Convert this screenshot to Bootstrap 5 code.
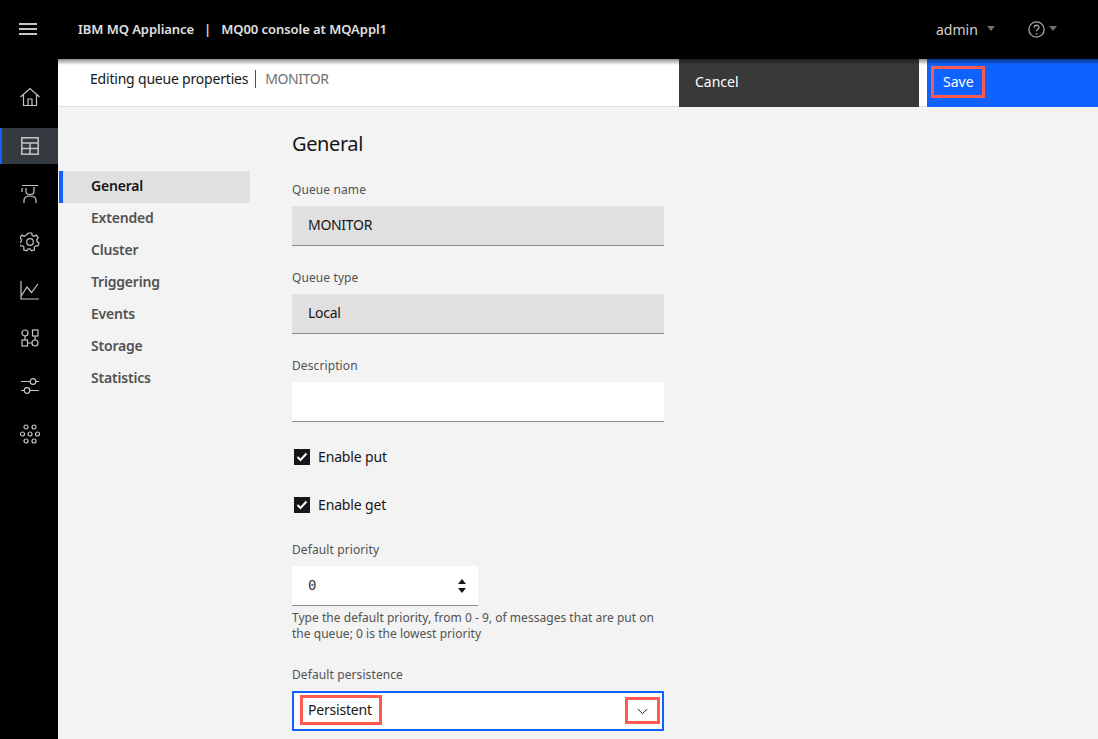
<!DOCTYPE html>
<html lang="en">
  <head>
    <meta charset="UTF-8" />
    <title>MQ00 console at MQAppl1</title>
    <link href="https://cdn.jsdelivr.net/npm/bootstrap@5.3.2/dist/css/bootstrap.min.css" rel="stylesheet" />
    <style>
      html, body { height: 739px; overflow: hidden; }
      body { font-family: "Noto Sans", "Liberation Sans", sans-serif; font-size: 14px; background: #f3f3f3; color: #161616; }

      /* top bar */
      .mq-top { height: 59px; background: #000; padding: 0; flex-wrap: nowrap; }
      .mq-burger { width: 58px; display: flex; justify-content: center; padding-right: 2px; }
      .mq-title { color: #e0e0e0; font-size: 13px; font-weight: 600; margin-left: 20px; white-space: pre; letter-spacing: -.05px; }
      .mq-right { margin-left: auto; width: 162px; height: 59px; position: relative; }
      .mq-admin { color: #d0d0d0; font-size: 14px; position: absolute; left: 0; top: 19px; }
      .mq-caret { width: 0; height: 0; border-left: 4px solid transparent; border-right: 4px solid transparent; border-top: 5px solid #6f6f6f; position: absolute; top: 26px; }
      .mq-help { position: absolute; left: 92px; top: 21px; }

      /* side rail */
      .mq-rail { width: 58px; background: #000; padding-top: 20px; gap: 12px; flex-shrink: 0; }
      .mq-rail-item { height: 36px; display: flex; align-items: center; justify-content: center; border-left: 2px solid transparent; }
      .mq-rail-item:first-child { margin-bottom: 1px; }
      .mq-rail-item.is-active { background: #343a3f; border-left-color: #0f62fe; }

      /* sub header */
      .mq-sub { height: 48px; background: #fff; border-bottom: 1px solid #e0e0e0; position: relative; flex-shrink: 0; }
      .mq-sub::after { content: ""; position: absolute; left: 0; right: 0; top: 0; height: 6px; background: linear-gradient(rgba(0,0,0,.45), rgba(0,0,0,0)); }
      .mq-crumb { margin-left: 32px; margin-top: 11px; display: flex; line-height: 18px; height: 18px; letter-spacing: -.2px; }
      .mq-crumb-name { color: #6f6f6f; border-left: 1px solid #525252; margin-left: 7px; padding-left: 9px; letter-spacing: -.4px; }
      .mq-btn { height: 48px; border-radius: 0; border: 0; color: #fff; font-size: 14px; text-align: left; display: flex; align-items: center; padding: 0; flex-shrink: 0; }
      .mq-cancel { width: 240px; background: #393939; padding: 0 0 3px 16px; margin-right: 8px; }
      .mq-cancel:hover { background: #393939; color: #fff; }
      .mq-save { width: 171px; background: #0f62fe; padding: 0 0 1px 4px; }
      .mq-save:hover { background: #0f62fe; color: #fff; }
      .mq-mark { border: 3px solid #ff5a4f; display: inline-flex; align-items: center; }
      .mq-save .mq-mark { width: 54px; height: 32px; padding: 0 0 2px 9px; margin-top: -1px; }

      /* section nav */
      .mq-nav { width: 191px; margin-left: 1px; padding-top: 64px; flex-shrink: 0; }
      .mq-nav .nav-link { height: 32px; padding: 0 0 0 28px; line-height: 30px; color: #525252; font-weight: 600; border-left: 4px solid transparent; letter-spacing: -.2px; }
      .mq-nav .nav-link.active { background: #e0e0e0; color: #161616; border-left-color: #0f62fe; }

      /* form */
      .mq-form { width: 372px; margin-left: 42px; }
      .mq-form h2 { font-size: 20px; font-weight: 400; line-height: 26px; margin: 24px 0 24px; letter-spacing: -.4px; }
      .mq-form .form-label { font-size: 12px; line-height: 16px; color: #525252; margin: 0 0 8px; padding-top: 1px; display: block; letter-spacing: .1px; }
      .mq-form .form-control { height: 40px; border: 0; border-bottom: 1px solid #8d8d8d; border-radius: 0; font-size: 14px; padding: 0 16px 2px; color: #161616; letter-spacing: -.3px; }
      .mq-form .form-control[readonly] { background: #e0e0e0; }
      .mq-field { margin-bottom: 23px; }
      .mq-field-desc { margin-bottom: 27px; }
      .mq-check { display: flex; align-items: center; gap: 8px; height: 16px; padding-left: 2px; margin-bottom: 32px; line-height: 16px; letter-spacing: -.15px; }
      .mq-check-last { margin-bottom: 28px; }
      .mq-box { width: 16px; height: 16px; background: #161616; display: flex; align-items: center; justify-content: center; }
      .mq-num { width: 186px; position: relative; }
      .mq-num .form-control { font-family: "DejaVu Sans Mono", monospace; font-size: 14px; color: #393939; }
      .mq-spin { position: absolute; right: 12px; top: 13px; }
      .mq-help-text { font-size: 12px; line-height: 16px; color: #525252; margin-top: 4px; margin-bottom: 24px; letter-spacing: .03px; }
      .mq-select { height: 40px; background: #fff; border: 2px solid #0f62fe; display: flex; align-items: center; justify-content: space-between; padding: 0 2px 0 6px; }
      .mq-select .mq-val { height: 30px; width: 82px; padding: 0 0 0 5px; margin-top: -3px; letter-spacing: -.2px; }
      .mq-select .mq-arrow { height: 27px; width: 35px; justify-content: center; margin-top: -2px; padding-top: 3px; }
    </style>
  </head>
  <body class="d-flex flex-column">
    <nav class="navbar mq-top">
      <div class="mq-burger">
        <svg width="18" height="14" viewBox="0 0 18 14" fill="#c6c6c6"><rect y="0" width="18" height="2"/><rect y="5" width="18" height="2"/><rect y="10" width="18" height="2"/></svg>
      </div>
      <span class="mq-title">IBM MQ Appliance   |   MQ00 console at MQAppl1</span>
      <div class="mq-right">
        <span class="mq-admin">admin</span>
        <span class="mq-caret" style="left: 51px"></span>
        <svg class="mq-help" width="17" height="17" viewBox="0 0 17 17" fill="none" stroke="#a8a8a8" stroke-width="1.300"><circle cx="8.500" cy="8.500" r="7.600"/><path d="M6.200 6.600c0-3.100 4.700-3.100 4.700-.2 0 1.900-2.400 1.800-2.400 3.900"/><circle cx="8.500" cy="12.800" r=".9" fill="#a8a8a8" stroke="none"/></svg>
        <span class="mq-caret" style="left: 113px"></span>
      </div>
    </nav>

    <div class="d-flex flex-grow-1 overflow-hidden">
      <div class="mq-rail d-flex flex-column">
        <div class="mq-rail-item">
          <svg width="20" height="20" viewBox="0 0 20 20" fill="none" stroke="#c6c6c6" stroke-width="1.200"><path d="M.5 10 10 1.500l9.500 8.500M3.500 8v10.500h13V8M8 18.500v-6.500h4v6.500"/></svg>
        </div>
        <div class="mq-rail-item is-active">
          <svg width="18" height="18" viewBox="0 0 18 18" fill="none" stroke="#c6c6c6" stroke-width="1.500"><rect x=".8" y=".8" width="16.400" height="16.400"/><path d="M.8 6h16.400M.8 11.500h16.400M9 6v11.200"/></svg>
        </div>
        <div class="mq-rail-item">
          <svg width="18" height="20" viewBox="0 0 18 20" fill="none" stroke="#c6c6c6" stroke-width="1.200"><path d="M1 1.500h16M1 4v4M5 4v3.500c0 4 8 4 8 0V3M3 19v-2.500c0-3 2-4.500 6-4.500s6 1.500 6 4.500V19"/></svg>
        </div>
        <div class="mq-rail-item">
          <svg width="20" height="20" viewBox="0 0 20 20" fill="none" stroke="#c6c6c6" stroke-width="1.200"><circle cx="10" cy="10" r="3.300"/><path d="M8.300 1h3.400l.6 2.500 1.700.8 2.300-1.200 2 2.600-1.600 2 .3 1.900 2 1.400-1 3-2.500-.1-1.300 1.500.3 2.500-3 1-1.400-2h-2l-1.400 2-3-1 .3-2.500-1.300-1.500-2.500.1-1-3 2-1.400.3-1.900-1.600-2 2-2.600 2.300 1.200 1.700-.8z"/></svg>
        </div>
        <div class="mq-rail-item">
          <svg width="20" height="20" viewBox="0 0 20 20" fill="none" stroke="#c6c6c6" stroke-width="1.200"><path d="M1 1v18h18M1.500 15.500 7 7l4.500 5.500L18 4"/></svg>
        </div>
        <div class="mq-rail-item">
          <svg width="20" height="20" viewBox="0 0 20 20" fill="none" stroke="#c6c6c6" stroke-width="1.200"><circle cx="5" cy="5" r="3"/><rect x="12.500" y="2" width="5.500" height="6"/><rect x="2" y="12" width="5.500" height="6"/><circle cx="15" cy="15" r="3"/><path d="M5 8v4M15 8v4M7.500 15H12"/></svg>
        </div>
        <div class="mq-rail-item">
          <svg width="20" height="20" viewBox="0 0 20 20" fill="none" stroke="#c6c6c6" stroke-width="1.200"><path d="M1 5.500h9M16 5.500h3M1 14.500h3M10 14.500h9"/><circle cx="13" cy="5.500" r="2.800"/><circle cx="7" cy="14.500" r="2.800"/></svg>
        </div>
        <div class="mq-rail-item">
          <svg width="20" height="20" viewBox="0 0 20 20" fill="none" stroke="#c6c6c6" stroke-width="1.200"><circle cx="6" cy="3" r="2"/><circle cx="14" cy="3" r="2"/><circle cx="2.500" cy="10" r="2"/><circle cx="10" cy="10" r="2"/><circle cx="17.500" cy="10" r="2"/><circle cx="6" cy="17" r="2"/><circle cx="14" cy="17" r="2"/></svg>
        </div>
      </div>

      <div class="flex-grow-1 d-flex flex-column overflow-hidden">
        <div class="mq-sub d-flex">
          <div class="mq-crumb flex-grow-1">
            <span>Editing queue properties</span>
            <span class="mq-crumb-name">MONITOR</span>
          </div>
          <button class="btn mq-btn mq-cancel" type="button">Cancel</button>
          <button class="btn mq-btn mq-save" type="button"><span class="mq-mark">Save</span></button>
        </div>

        <div class="d-flex flex-grow-1">
          <nav class="nav flex-column flex-nowrap mq-nav">
            <a class="nav-link active" href="#">General</a>
            <a class="nav-link" href="#">Extended</a>
            <a class="nav-link" href="#">Cluster</a>
            <a class="nav-link" href="#">Triggering</a>
            <a class="nav-link" href="#">Events</a>
            <a class="nav-link" href="#">Storage</a>
            <a class="nav-link" href="#">Statistics</a>
          </nav>

          <form class="mq-form">
            <h2>General</h2>
            <div class="mq-field">
              <label class="form-label">Queue name</label>
              <input class="form-control" type="text" value="MONITOR" readonly />
            </div>
            <div class="mq-field">
              <label class="form-label">Queue type</label>
              <input class="form-control" type="text" value="Local" readonly />
            </div>
            <div class="mq-field mq-field-desc">
              <label class="form-label">Description</label>
              <input class="form-control" type="text" />
            </div>
            <div class="mq-check">
              <span class="mq-box"><svg width="12" height="10" viewBox="0 0 12 10" fill="none" stroke="#fff" stroke-width="2"><path d="M1.500 5l3 3 6-6.500"/></svg></span>
              Enable put
            </div>
            <div class="mq-check mq-check-last">
              <span class="mq-box"><svg width="12" height="10" viewBox="0 0 12 10" fill="none" stroke="#fff" stroke-width="2"><path d="M1.500 5l3 3 6-6.500"/></svg></span>
              Enable get
            </div>
            <label class="form-label">Default priority</label>
            <div class="mq-num">
              <input class="form-control" type="text" value="0" />
              <svg class="mq-spin" width="8" height="14" viewBox="0 0 8 14" fill="#161616"><path d="M4 0l4 5H0zM4 14l4-5H0z"/></svg>
            </div>
            <div class="mq-help-text">Type the default priority, from 0 - 9, of messages that are put on the queue; 0 is the lowest priority</div>
            <label class="form-label">Default persistence</label>
            <div class="mq-select">
              <span class="mq-mark mq-val">Persistent</span>
              <span class="mq-mark mq-arrow"><svg width="11" height="7" viewBox="0 0 11 7" fill="none" stroke="#161616"><path d="M.8 1l4.700 4.700L10.200 1"/></svg></span>
            </div>
          </form>
        </div>
      </div>
    </div>
    <script src="https://cdn.jsdelivr.net/npm/bootstrap@5.3.2/dist/js/bootstrap.bundle.min.js"></script>
  </body>
</html>
